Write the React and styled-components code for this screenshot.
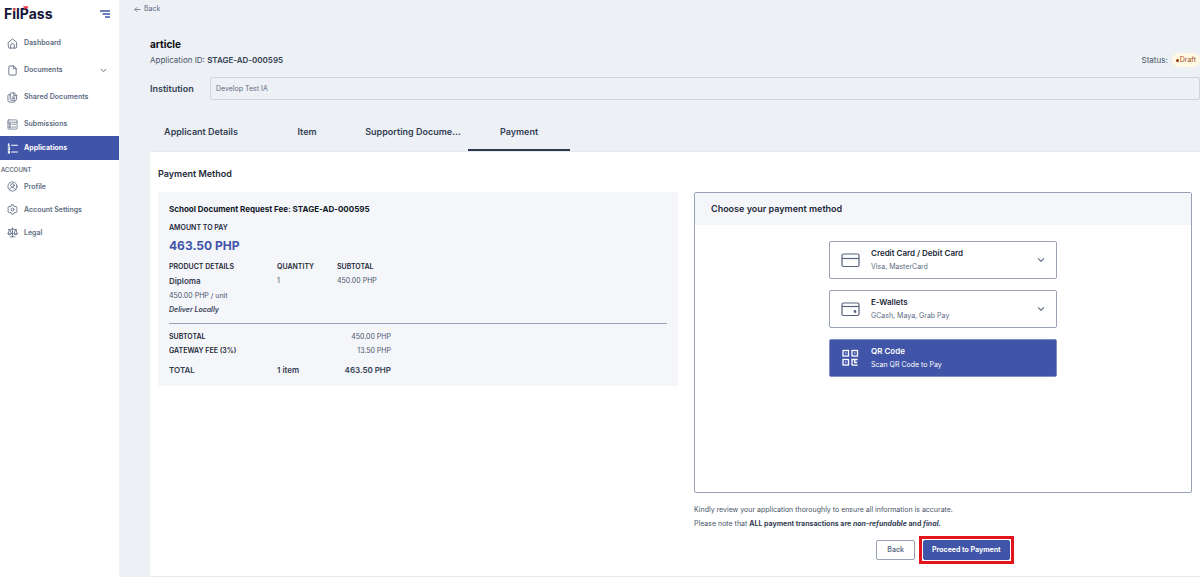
import React from "react";
import styled, { createGlobalStyle, css } from "styled-components";

const GlobalStyle = createGlobalStyle`
  * { box-sizing: border-box; }
  body {
    margin: 0;
    background: #edf0f5;
    color: #475467;
    font-family: Inter, "Liberation Sans", sans-serif;
    font-size: 7px;
    line-height: 14px;
  }
  h1, h2, h3, p { margin: 0; }
  button, input { font: inherit; color: inherit; }
  svg { display: block; flex: none; }
`;

const Shell = styled.div`
  display: flex;
  min-height: 100vh;
`;

/* Sidebar */
const Sidebar = styled.aside`
  flex: none;
  width: 119px;
  background: #fff;
`;
const Brand = styled.div`
  display: flex;
  align-items: center;
  justify-content: space-between;
  height: 28px;
  padding: 0 9px 0 4px;
  margin-bottom: 3px;
`;
const Logo = styled.a`
  position: relative;
  color: #14163a;
  font-family: Inter, sans-serif;
  font-size: 14px;
  font-weight: 700;
  line-height: 16px;
  text-decoration: none;
`;
const LogoMark = styled.svg`
  position: absolute;
  left: 8px;
  top: 0;
`;
const IconButton = styled.button`
  padding: 0;
  border: 0;
  background: none;
`;
const Nav = styled.nav`
  display: flex;
  flex-direction: column;
`;
const NavGroup = styled.div`
  display: flex;
  flex-direction: column;
  gap: ${(p) => p.$gap || 0}px;
`;
const NavLink = styled.a`
  display: flex;
  align-items: center;
  gap: 6px;
  height: ${(p) => (p.$compact ? 23 : 24)}px;
  padding: 0 12px 0 7px;
  color: ${(p) => (p.$active ? "#fff" : "#5d6b82")};
  background: ${(p) => (p.$active ? "#4054a8" : "transparent")};
  font-weight: ${(p) => (p.$active ? 700 : 600)};
  text-decoration: none;
`;
const NavText = styled.span`
  flex: 1;
`;
const NavHeading = styled.h2`
  padding: 4px 0 0 1px;
  color: #475467;
  font-size: 6px;
  font-weight: 500;
  line-height: 11px;
`;

/* Main column */
const Main = styled.main`
  flex: 1;
  min-width: 0;
  padding: 0 0 1px 31px;
`;
const BackLink = styled.a`
  display: flex;
  align-items: center;
  gap: 3px;
  width: max-content;
  margin-left: -16px;
  padding-top: 2px;
  color: #5d6b82;
  text-decoration: none;
`;
const Title = styled.h1`
  margin-top: 20px;
  color: #0b0d12;
  font-size: 10px;
  font-weight: 700;
  line-height: 16px;
`;
const MetaRow = styled.div`
  display: flex;
  align-items: center;
  justify-content: space-between;
  height: 16px;
  font-size: 8px;
  strong { color: #344054; font-weight: 600; }
`;
const Status = styled.div`
  display: flex;
  align-items: center;
  gap: 4px;
`;
const Badge = styled.span`
  display: flex;
  align-items: center;
  gap: 1px;
  padding: 0 4px;
  border-radius: 8px;
  background: #fff8e3;
  color: #a1501b;
  font-size: 7px;
  &::before {
    content: "";
    width: 3px;
    height: 3px;
    border-radius: 50%;
    background: #93370d;
  }
`;
const InstitutionRow = styled.div`
  display: flex;
  align-items: center;
  margin-top: 9px;
`;
const FieldLabel = styled.label`
  width: 60px;
  color: #344054;
  font-size: 9px;
  font-weight: 600;
`;
const TextField = styled.input`
  flex: 1;
  min-width: 0;
  height: 23px;
  padding: 0 5px;
  border: 1px solid #d0d5dd;
  border-radius: 2px;
  background: transparent;
  color: #5d6b82;
  outline: none;
`;
const Tabs = styled.div`
  display: flex;
  gap: 4px;
  margin-top: 14px;
`;
const Tab = styled.button`
  width: 102px;
  height: 37px;
  padding: 0;
  border: 0;
  border-bottom: 2px solid ${(p) => (p.$active ? "#2c3a50" : "transparent")};
  background: none;
  color: #344054;
  font-size: 9px;
  font-weight: 600;
  white-space: nowrap;
`;
const Card = styled.section`
  padding: 13px 8px 12px;
  border: 1px solid #e6e9ef;
  border-width: 1px 0;
  background: #fff;
`;
const SectionTitle = styled.h2`
  color: #1d2939;
  font-size: 9px;
  font-weight: 600;
  line-height: 18px;
`;
const Columns = styled.div`
  display: grid;
  grid-template-columns: 520fr 498fr;
  gap: 16px;
  align-items: start;
  margin-top: 9px;
`;

/* Fee summary */
const Summary = styled.div`
  padding: 9px 11px 8px;
  background: #f5f6fa;
`;
const SummaryTitle = styled.h3`
  color: #101828;
  font-size: 8px;
  font-weight: 700;
  line-height: 16px;
`;
const Caption = styled.p`
  margin-top: 4px;
  color: #1d2939;
  font-weight: 600;
`;
const Amount = styled.p`
  margin: 2px 0 5px;
  color: #4054a8;
  font-size: 12px;
  font-weight: 700;
  line-height: 18px;
`;
const FeeTable = styled.table`
  width: 100%;
  table-layout: fixed;
  border-collapse: collapse;
  th, td {
    padding: 0;
    text-align: left;
    vertical-align: top;
    font-weight: 400;
  }
  th { color: #1d2939; font-weight: 600; }
`;
const Col = styled.col`
  width: ${(p) => (p.$w ? `${p.$w}px` : "auto")};
`;
const ProductName = styled.p`
  color: #344054;
  font-size: 8px;
  font-weight: 600;
  line-height: 15px;
`;
const Delivery = styled.p`
  color: #344054;
  font-weight: 600;
  font-style: italic;
`;
const Divider = styled.hr`
  height: 1px;
  margin: 6px 0;
  border: 0;
  background: #98a2b3;
`;
const TotalsTable = styled(FeeTable)`
  td:nth-child(3) { text-align: right; }
`;
const TotalRow = styled.tr`
  th, td {
    padding-top: 4px;
    color: #344054;
    font-size: 8px;
    font-weight: 600;
    line-height: 16px;
  }
`;

/* Payment methods */
const Panel = styled.div`
  min-height: 301px;
  border: 1px solid #98a2b3;
  border-radius: 2px;
`;
const PanelTitle = styled.h3`
  padding: 8px 16px;
  background: #f5f6fa;
  color: #1d2939;
  font-size: 9px;
  font-weight: 600;
  line-height: 16px;
`;
const Options = styled.div`
  display: flex;
  flex-direction: column;
  align-items: center;
  gap: 11px;
  padding: 16px;
`;
const Option = styled.button`
  display: flex;
  align-items: center;
  gap: 10px;
  width: 228px;
  max-width: 100%;
  height: 38px;
  padding: 0 11px;
  border: 1px solid #98a2b3;
  border-radius: 2px;
  background: #fff;
  color: #5d6b82;
  text-align: left;
  ${(p) =>
    p.$active &&
    css`
      border-color: #7f8dc4;
      background: #4054a8;
      color: #fff;
    `}
`;
const OptionText = styled.span`
  flex: 1;
  strong {
    display: block;
    color: ${(p) => (p.$active ? "#fff" : "#1d2939")};
    font-size: 8px;
    font-weight: 600;
  }
`;
const Notes = styled.div`
  margin-top: 10px;
  strong { color: #344054; font-weight: 700; }
`;
const Actions = styled.div`
  display: flex;
  align-items: center;
  justify-content: center;
  gap: 4px;
  margin-top: 5px;
  padding-left: 4px;
`;
const Highlight = styled.div`
  padding: 1px;
  border: 3px solid #e3141b;
`;
const Button = styled.button`
  display: block;
  height: 20px;
  padding: 0 ${(p) => (p.$primary ? 8 : 10)}px;
  border: 1px solid ${(p) => (p.$primary ? "#4054a8" : "#98a2b3")};
  border-radius: 2px;
  background: ${(p) => (p.$primary ? "#4054a8" : "#fff")};
  color: ${(p) => (p.$primary ? "#fff" : "#5d6b82")};
  font-weight: ${(p) => (p.$primary ? 700 : 600)};
`;

const Line = ({ size = 11, box = 24, width = 1.9, children }) => (
  <svg width={size} height={size} viewBox={`0 0 ${box} ${box}`} fill="none" stroke="currentColor"
    strokeWidth={width} strokeLinecap="round" strokeLinejoin="round" aria-hidden="true">
    {children}
  </svg>
);

const icons = {
  home: (
    <Line><path d="M3 9.500 12 2l9 7.500V20a2 2 0 0 1-2 2H5a2 2 0 0 1-2-2z" /><path d="M8 22v-6a4 4 0 0 1 8 0v6" /></Line>
  ),
  file: (
    <Line><path d="M14 2H6a2 2 0 0 0-2 2v16a2 2 0 0 0 2 2h12a2 2 0 0 0 2-2V8z" /><path d="M14 2v6h6" /></Line>
  ),
  shared: (
    <Line>
      <path d="M15 2H9a2 2 0 0 0-2 2v12a2 2 0 0 0 2 2h10a2 2 0 0 0 2-2V8z" /><path d="M15 2v6h6M11 11h6M11 14.500h6" />
      <path d="M7 6H4a2 2 0 0 0-2 2v10a4 4 0 0 0 4 4h9a2 2 0 0 0 2-2v-2" />
    </Line>
  ),
  submissions: (
    <Line width={1.6}>
      <rect x="2" y="2" width="20" height="20" rx="2" /><path d="M2 7h20" />
      <rect x="5" y="10" width="3" height="3" /><rect x="5" y="16" width="3" height="3" /><path d="M11 11.500h8M11 17.500h8" />
    </Line>
  ),
  applications: (
    <Line width={2.2}>
      <path d="M2.500 2.500 4 1.800V6M2.500 6h3M2.500 9.500h3v2l-3 2.500h3M2.500 17.500h3v4.500h-3M3.500 19.700h2" />
      <path d="M10 5h13M10 19.500h13" />
    </Line>
  ),
  profile: (
    <Line><circle cx="12" cy="12" r="10" /><circle cx="12" cy="9.500" r="3.700" /><path d="M5.500 19c1-3.500 3.500-4.500 6.500-4.500s5.500 1 6.500 4.500" /></Line>
  ),
  settings: (
    <Line>
      <path d="M9.800 2h4.400l1 2.600 2.300 1.300 2.800-.4 2 3.600L20.700 12l1.600 2.900-2 3.600-2.800-.4-2.300 1.300-1 2.600H9.800l-1-2.600-2.300-1.300-2.800.4-2-3.600L3.300 12 1.700 9.100l2-3.600 2.800.4 2.300-1.300z" />
      <circle cx="12" cy="12" r="3.200" />
    </Line>
  ),
  legal: (
    <Line>
      <path d="M12 2v19M7 21.500h10M3 5.500h4l5-1.500 5 1.500h4" />
      <path d="M5.500 6 2 15h7zM18.500 6 15 15h7zM2 15c.5 3 6.500 3 7 0M15 15c.5 3 6.500 3 7 0" />
    </Line>
  ),
};

const Chevron = ({ size = 7 }) => (
  <Line size={size} width={3.2}><path d="m4 8 8 8 8-8" /></Line>
);

const CardIcon = ({ wallet }) => (
  <svg width="20" height="16" viewBox="0 0 20 16" fill="none" stroke="#56637a" strokeWidth="1.200" aria-hidden="true">
    <rect x="1" y="2" width="17" height="12.500" rx="1.500" />
    <path d={wallet ? "M1 5.500h17" : "M1 6.500h17"} />
    {wallet && <circle cx="14" cy="10.500" r="0.800" fill="#56637a" />}
  </svg>
);

const QrIcon = () => (
  <svg width="20" height="18" viewBox="0 0 20 18" fill="none" stroke="#fff" strokeWidth="1.300" aria-hidden="true">
    <rect x="2" y="1.500" width="5.500" height="5.500" />
    <rect x="11" y="1.500" width="5.500" height="5.500" />
    <rect x="2" y="10.500" width="5.500" height="5.500" />
    <path d="M4.200 4.200h1.200M13.200 4.200h1.200M4.200 13.200h1.200M11 16.200v-5.700h5.700M13.700 10.500v3h2.500M11 16.200h5.700" />
  </svg>
);

const primaryNav = [
  ["home", "Dashboard"],
  ["file", "Documents", true],
  ["shared", "Shared Documents"],
  ["submissions", "Submissions"],
];
const accountNav = [
  ["profile", "Profile"],
  ["settings", "Account Settings"],
  ["legal", "Legal"],
];
const tabs = ["Applicant Details", "Item", "Supporting Docume...", "Payment"];

const NavItem = ({ icon, label, expandable, active, compact }) => (
  <NavLink href="#" $active={active} $compact={compact}>
    {icons[icon]}
    <NavText>{label}</NavText>
    {expandable && <Chevron />}
  </NavLink>
);

const MethodOption = ({ icon, title, detail, active }) => (
  <Option type="button" $active={active}>
    {icon}
    <OptionText $active={active}>
      <strong>{title}</strong>
      {detail}
    </OptionText>
    {!active && <Chevron size={8} />}
  </Option>
);

const FeeColumns = () => (
  <colgroup>
    <Col $w={108} />
    <Col $w={60} />
    <Col $w={54} />
    <Col />
  </colgroup>
);

export default function App() {
  return (
    <>
      <GlobalStyle />
      <Shell>
        <Sidebar>
          <Brand>
            <Logo href="#">
              FilPass
              <LogoMark width="17" height="6" viewBox="0 0 17 6" aria-hidden="true">
                <path d="M11 .3h5.500L15 3.200 13.700 2 12.500 3.200z" fill="#ef3e4a" />
                <circle cx="2.300" cy="3.400" r="1.300" fill="#ef3e4a" />
              </LogoMark>
            </Logo>
            <IconButton type="button" aria-label="Toggle menu">
              <svg width="10" height="8" viewBox="0 0 10 8" stroke="#4054a8" strokeWidth="1.300" aria-hidden="true">
                <path d="M0 1h10M2.500 4H10M5 7h5" />
              </svg>
            </IconButton>
          </Brand>
          <Nav>
            <NavGroup $gap={3}>
              {primaryNav.map(([icon, label, expandable]) => (
                <NavItem key={label} icon={icon} label={label} expandable={expandable} />
              ))}
            </NavGroup>
            <NavItem icon="applications" label="Applications" active />
            <NavHeading>ACCOUNT</NavHeading>
            <NavGroup>
              {accountNav.map(([icon, label]) => (
                <NavItem key={label} icon={icon} label={label} compact />
              ))}
            </NavGroup>
          </Nav>
        </Sidebar>

        <Main>
          <BackLink href="#">
            <Line size={7} width={2.5}><path d="M21 12H3M10 5l-7 7 7 7" /></Line>
            Back
          </BackLink>
          <Title>article</Title>
          <MetaRow>
            <span>Application ID: <strong>STAGE-AD-000595</strong></span>
            <Status>Status: <Badge>Draft</Badge></Status>
          </MetaRow>
          <InstitutionRow>
            <FieldLabel htmlFor="institution">Institution</FieldLabel>
            <TextField id="institution" readOnly value="Develop Test IA" />
          </InstitutionRow>
          <Tabs role="tablist">
            {tabs.map((label) => (
              <Tab key={label} type="button" role="tab" aria-selected={label === "Payment"} $active={label === "Payment"}>
                {label}
              </Tab>
            ))}
          </Tabs>

          <Card>
            <SectionTitle>Payment Method</SectionTitle>
            <Columns>
              <Summary>
                <SummaryTitle>School Document Request Fee: STAGE-AD-000595</SummaryTitle>
                <Caption>AMOUNT TO PAY</Caption>
                <Amount>463.50 PHP</Amount>
                <FeeTable>
                  <FeeColumns />
                  <thead>
                    <tr><th>PRODUCT DETAILS</th><th>QUANTITY</th><th colSpan={2}>SUBTOTAL</th></tr>
                  </thead>
                  <tbody>
                    <tr>
                      <td>
                        <ProductName>Diploma</ProductName>
                        <p>450.00 PHP / unit</p>
                        <Delivery>Deliver Locally</Delivery>
                      </td>
                      <td>1</td>
                      <td colSpan={2}>450.00 PHP</td>
                    </tr>
                  </tbody>
                </FeeTable>
                <Divider />
                <TotalsTable>
                  <FeeColumns />
                  <tbody>
                    <tr><th>SUBTOTAL</th><td /><td>450.00 PHP</td><td /></tr>
                    <tr><th>GATEWAY FEE (3%)</th><td /><td>13.50 PHP</td><td /></tr>
                    <TotalRow><th>TOTAL</th><td>1 item</td><td>463.50 PHP</td><td /></TotalRow>
                  </tbody>
                </TotalsTable>
              </Summary>

              <div>
                <Panel>
                  <PanelTitle>Choose your payment method</PanelTitle>
                  <Options>
                    <MethodOption icon={<CardIcon />} title="Credit Card / Debit Card" detail="Visa, MasterCard" />
                    <MethodOption icon={<CardIcon wallet />} title="E-Wallets" detail="GCash, Maya, Grab Pay" />
                    <MethodOption icon={<QrIcon />} title="QR Code" detail="Scan QR Code to Pay" active />
                  </Options>
                </Panel>
                <Notes>
                  <p>Kindly review your application thoroughly to ensure all information is accurate.</p>
                  <p>
                    Please note that{" "}
                    <strong>ALL payment transactions are <em>non-refundable</em> and <em>final.</em></strong>
                  </p>
                </Notes>
                <Actions>
                  <Button type="button">Back</Button>
                  <Highlight>
                    <Button type="button" $primary>Proceed to Payment</Button>
                  </Highlight>
                </Actions>
              </div>
            </Columns>
          </Card>
        </Main>
      </Shell>
    </>
  );
}
